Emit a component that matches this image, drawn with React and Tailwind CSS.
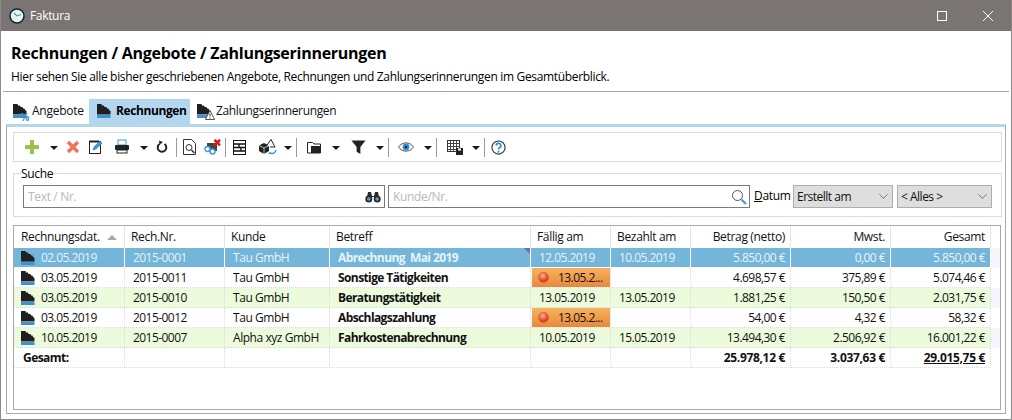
import { ChevronDown } from 'lucide-react';

const rows = [
    { date: '02.05.2019', nr: '2015-0001', kunde: 'Tau GmbH', betreff: 'Abrechnung  Mai 2019', faellig: '12.05.2019', bezahlt: '10.05.2019', betrag: '5.850,00 €', mwst: '0,00 €', gesamt: '5.850,00 €', selected: true },
    { date: '03.05.2019', nr: '2015-0011', kunde: 'Tau GmbH', betreff: 'Sonstige Tätigkeiten', faellig: '13.05.2...', bezahlt: '', betrag: '4.698,57 €', mwst: '375,89 €', gesamt: '5.074,46 €', overdue: true },
    { date: '03.05.2019', nr: '2015-0010', kunde: 'Tau GmbH', betreff: 'Beratungstätigkeit', faellig: '13.05.2019', bezahlt: '13.05.2019', betrag: '1.881,25 €', mwst: '150,50 €', gesamt: '2.031,75 €', paid: true },
    { date: '03.05.2019', nr: '2015-0012', kunde: 'Tau GmbH', betreff: 'Abschlagszahlung', faellig: '13.05.2...', bezahlt: '', betrag: '54,00 €', mwst: '4,32 €', gesamt: '58,32 €', overdue: true },
    { date: '10.05.2019', nr: '2015-0007', kunde: 'Alpha xyz GmbH', betreff: 'Fahrkostenabrechnung', faellig: '10.05.2019', bezahlt: '15.05.2019', betrag: '13.494,30 €', mwst: '2.506,92 €', gesamt: '16.001,22 €', paid: true },
];

const headers = [
    ['Rechnungsdat.', 'w-[111px]', 'pl-[7px]'],
    ['Rech.Nr.', 'w-[100px]', 'pl-1.5'],
    ['Kunde', 'w-[105px]', 'pl-1.5'],
    ['Betreff', 'w-[201px]', 'pl-1.5'],
    ['Fällig am', 'w-[80px]', 'pl-1.5'],
    ['Bezahlt am', 'w-[80px]', 'pl-1.5'],
    ['Betrag (netto)', 'w-[100px]', 'justify-end pr-[5px]'],
    ['Mwst.', 'w-[100px]', 'justify-end pr-[5px]'],
    ['Gesamt', 'w-[100px]', 'justify-end pr-[5px]'],
];

function DocIcon() {
    return (
        <svg viewBox="0 0 14 14" className="w-[14px] h-[14px] shrink-0">
            <path d="M0 0h4.500l.5 1.500h2L7.500 3h2l.5 1.500h1.500L12 6l1.500 1v3.500H0z" fill="#1f1f1f" />
            <rect x="0" y="11" width="13.500" height="3" fill="#3a93d3" />
        </svg>
    );
}

function Caret({ className = '' }) {
    return <span className={`w-0 h-0 shrink-0 border-x-[4px] border-x-transparent border-t-[4px] border-t-[#1a1a1a] mt-0.5 ${className}`} />;
}

function Sep({ className = '' }) {
    return <span className={`w-px h-[19px] shrink-0 bg-[#9a9a9a] ${className}`} />;
}

function Cell({ className = '', children }) {
    return <div className={`h-5 flex items-center shrink-0 whitespace-nowrap border-r border-b border-dotted border-[#dcdcdc] ${className}`}>{children}</div>;
}

function Tab({ label, active, badge, className }) {
    return (
        <div className={`h-[25px] flex items-center gap-[5px] pb-0.5 text-[12px] ${active ? 'bg-[#b3d7ef] font-bold' : 'text-[#111]'} ${className}`}>
            <span className="relative">
                <DocIcon />
                {badge === 'percent' && <span className="absolute -right-0.5 -bottom-1 text-[10px] leading-none font-bold text-[#2f8fd6]">%</span>}
                {badge === 'warn' && (
                    <svg viewBox="0 0 10 10" className="absolute -right-1 -bottom-0.5 w-2.5 h-2.5">
                        <path d="M5 .5 9.700 9.500H.3z" fill="#fff" stroke="#555" />
                        <path d="M5 3.500v3M5 7.500v1" stroke="#333" />
                    </svg>
                )}
            </span>
            {label}
        </div>
    );
}

function Toolbar() {
    return (
        <div className="h-[30px] border border-[#dcdcdc] flex items-center pl-[11px]">
            <svg viewBox="0 0 14 14" className="w-[14px] h-[14px] shrink-0"><path d="M5 0h4v5h5v4H9v5H5V9H0V5h5z" fill="#9bbf55" /></svg>
            <Caret className="ml-[11px]" />
            <svg viewBox="0 0 14 14" className="w-[14px] h-[14px] ml-[8px] shrink-0"><path d="M2 2l10 10M12 2 2 12" stroke="#f2705c" strokeWidth="3.400" /></svg>
            <svg viewBox="0 0 16 16" className="w-4 h-4 ml-[8px] shrink-0">
                <rect x="1.500" y="2.500" width="11" height="12" fill="#fff" stroke="#222" />
                <path d="M2 1v3M4 1v3M6 1v3M8 1v3M10 1v3" stroke="#222" />
                <path d="M5 11l1-3 6-6 2 2-6 6z" fill="#3d9ad9" stroke="#1f6fa8" strokeWidth=".6" />
            </svg>
            <svg viewBox="0 0 16 16" className="w-4 h-4 ml-[10px] shrink-0">
                <rect x="4" y="1" width="8" height="5" fill="#fff" stroke="#3d9ad9" />
                <rect x="1" y="6" width="14" height="5" rx="1" fill="#222" />
                <rect x="3" y="11" width="10" height="3" fill="#fff" stroke="#222" />
            </svg>
            <Caret className="ml-[10px]" />
            <svg viewBox="0 0 12 14" className="w-[12px] h-[14px] ml-[8px] shrink-0" fill="none">
                <path d="M3.500 4a4.300 4.300 0 1 0 5 0" stroke="#222" strokeWidth="2" />
                <path d="M3 .5l4 1.500-3.500 3z" fill="#222" />
            </svg>
            <Sep className="ml-[8px]" />
            <svg viewBox="0 0 13 16" className="w-[13px] h-4 ml-[6px] shrink-0" fill="none" stroke="#333">
                <path d="M.5.5h8l4 4v11H.5z" />
                <circle cx="6" cy="8.500" r="3" />
                <path d="M8.500 11l3 3" strokeWidth="1.500" />
            </svg>
            <svg viewBox="0 0 17 16" className="w-[17px] h-4 ml-[8px] shrink-0" fill="none">
                <path d="M3 4h10v8H3z" fill="#444" />
                <circle cx="3.500" cy="10" r="2.500" fill="#fff" stroke="#3d9ad9" strokeWidth="1.400" />
                <circle cx="8.500" cy="12.500" r="2.500" fill="#fff" stroke="#3d9ad9" strokeWidth="1.400" />
                <path d="M10.500 .8l5.500 5.500M16 .8l-5.500 5.500" stroke="#e8121a" strokeWidth="2.600" />
            </svg>
            <Sep className="ml-[4px]" />
            <svg viewBox="0 0 13 15" className="w-[13px] h-[15px] ml-[7px] shrink-0" fill="none" stroke="#111">
                <rect x=".5" y=".5" width="12" height="14" />
                <path d="M.5 4h12M.5 7.500h12M.5 11h12M6 4v3.500M8 7.500V11" strokeWidth="1.400" />
            </svg>
            <svg viewBox="0 0 20 16" className="w-5 h-4 ml-[12px] shrink-0">
                <path d="M1 6.500 6 4l5 2.500V12l-5 3-5-3z" fill="#222" />
                <path d="M6 9v6M1 6.500 6 9l5-2.500" stroke="#fff" strokeWidth=".7" fill="none" />
                <path d="M9 6l4-5.500L17 8h-5" fill="#fff" stroke="#222" />
                <path d="M18 11a4 4 0 0 1-6 3l-1.500.5" fill="none" stroke="#3d9ad9" strokeWidth="1.500" />
            </svg>
            <Caret className="ml-[6px]" />
            <Sep className="ml-[4px]" />
            <svg viewBox="0 0 14 14" className="w-[14px] h-[14px] ml-[10px] shrink-0">
                <path d="M.5 2.500h5L7 4h6.500v9H.5z" fill="#fff" stroke="#222" />
                <path d="M4 6h9.500v7H4z" fill="#222" />
            </svg>
            <Caret className="ml-[11px]" />
            <svg viewBox="0 0 16 16" className="w-[15px] h-4 ml-[11px] shrink-0"><path d="M.5 1h15L10 8v7.500L6 13V8z" fill="#222" /></svg>
            <Caret className="ml-[10px]" />
            <Sep className="ml-[4px]" />
            <svg viewBox="0 0 16 12" className="w-4 h-3 ml-[9px] shrink-0">
                <path d="M.5 6C4 .5 12 .5 15.500 6 12 11.500 4 11.500.5 6z" fill="#fff" stroke="#555" />
                <circle cx="8" cy="6" r="3.400" fill="#2f8fd6" />
                <circle cx="8" cy="6" r="1.300" fill="#123" />
            </svg>
            <Caret className="ml-[10px]" />
            <Sep className="ml-[4px]" />
            <svg viewBox="0 0 16 16" className="w-4 h-4 ml-[10px] shrink-0">
                <rect x=".5" y="1.500" width="12" height="11" fill="#fff" stroke="#333" />
                <path d="M.5 4.500h12M.5 7.500h12M.5 10.500h12M3.500 2v10M6.500 2v10M9.500 2v10" stroke="#444" />
                <rect x="9" y="9" width="7" height="7" fill="#222" />
                <rect x="11" y="9.500" width="3" height="2" fill="#fff" />
            </svg>
            <Caret className="ml-[9px]" />
            <Sep className="ml-[4px]" />
            <svg viewBox="0 0 16 16" className="w-[15px] h-[15px] ml-[6px] shrink-0" fill="none">
                <circle cx="8" cy="8" r="7" stroke="#333" strokeWidth="1.200" />
                <path d="M5.500 6a2.500 2.500 0 1 1 3.500 2.300c-.8.4-1 .9-1 1.700" stroke="#2f8fd6" strokeWidth="1.800" />
                <path d="M7 11.500h2v2H7z" fill="#2f8fd6" />
            </svg>
        </div>
    );
}

function Select({ label, className }) {
    return (
        <div className={`h-[23px] bg-[#dedede] border border-[#adadad] flex items-center justify-between pl-[3px] pr-[1px] text-[12px] tracking-[-0.5px] text-[#111] whitespace-pre ${className}`}>
            {label}
            <ChevronDown size={15} strokeWidth={1.100} className="text-[#444]" />
        </div>
    );
}

function SearchBox() {
    return (
        <fieldset className="relative h-[44px] border border-[#dcdcdc] mt-[11px]">
            <span className="absolute -top-[8px] left-[7px] text-[12px] leading-4 bg-white">Suche</span>
            <div className="flex items-center pt-[11px] pl-[9px]">
                <div className="w-[362px] h-[23px] border border-[#7a7a7a] flex items-center justify-between pl-1 pr-[3px] text-[12px] text-[#b8b8b8]">
                    Text / Nr.
                    <svg viewBox="0 0 16 12" className="w-4 h-3">
                        <circle cx="3.800" cy="8" r="3.500" fill="#2a2a2a" />
                        <circle cx="12.200" cy="8" r="3.500" fill="#2a2a2a" />
                        <path d="M3 1h3l1 4h2l1-4h3l1 5H2z" fill="#2a2a2a" />
                        <circle cx="3.800" cy="8" r="1.800" fill="#4aa0de" />
                        <circle cx="12.200" cy="8" r="1.800" fill="#4aa0de" />
                    </svg>
                </div>
                <div className="w-[362px] h-[23px] ml-[3px] border border-[#7a7a7a] flex items-center justify-between pl-1 pr-0.5 text-[12px] text-[#b8b8b8]">
                    Kunde/Nr.
                    <svg viewBox="0 0 16 16" className="w-4 h-4" fill="none">
                        <circle cx="6.500" cy="6.500" r="5" stroke="#555" />
                        <path d="M10.500 10.500l4.500 4.500" stroke="#3d9ad9" strokeWidth="2.200" />
                    </svg>
                </div>
                <span className="w-[36px] ml-1 mb-0.5 text-[12px]"><span className="underline">D</span>atum</span>
                <Select label="Erstellt am" className="w-[100px] ml-[3px]" />
                <Select label="< Alles >" className="w-[95px] ml-[4px]" />
            </div>
        </fieldset>
    );
}

function Row({ row }) {
    const bg = row.selected ? 'bg-[#74b6d9] text-[#e8f3f9]' : row.paid ? 'bg-[#ebfbdc]' : 'bg-white';
    const filler = row.selected || row.paid ? 'bg-[#f6f6ff]' : 'bg-white';
    const line = row.selected ? 'border-solid border-r-white border-b-white' : '';
    const num = `tracking-[-0.55px] ${line}`;
    return (
        <div className="flex text-[12px] leading-none text-[#111]">
            <div className={`flex ${bg}`}>
                <Cell className={`w-[111px] pl-[7px] gap-[6px] ${num}`}><DocIcon />{row.date}</Cell>
                <Cell className={`w-[100px] pl-2 ${num}`}>{row.nr}</Cell>
                <Cell className={`w-[105px] pl-2 tracking-[-0.45px] ${line}`}>{row.kunde}</Cell>
                <Cell className={`w-[201px] pl-2 font-bold whitespace-pre relative tracking-[-0.6px] ${line}`}>
                    {row.betreff}
                    {row.selected && <span className="absolute top-0 right-0 w-0 h-0 border-l-[6px] border-l-transparent border-t-[6px] border-t-[#6a6fb5]" />}
                </Cell>
                {row.overdue ? (
                    <Cell className={`w-[80px] pl-px ${num}`}>
                        <div className="w-full h-[19px] bg-gradient-to-b from-[#f7b25e] to-[#e8883a] flex items-center gap-[9px] pl-[6px]">
                            <span className="w-[11px] h-[11px] rounded-full bg-[radial-gradient(circle_at_40%_30%,#ffb199,#e8381a_65%)] border border-[#c96a30]" />
                            13.05.2...
                        </div>
                    </Cell>
                ) : (
                    <Cell className={`w-[80px] pl-2 ${num}`}>{row.faellig}</Cell>
                )}
                <Cell className={`w-[80px] pl-2 ${num}`}>{row.bezahlt}</Cell>
                <Cell className={`w-[100px] justify-end pr-[5px] ${num}`}>{row.betrag}</Cell>
                <Cell className={`w-[100px] justify-end pr-[5px] ${num}`}>{row.mwst}</Cell>
                <Cell className={`w-[100px] justify-end pr-[5px] ${num}`}>{row.gesamt}</Cell>
            </div>
            <div className={`flex-1 h-5 ${filler}`} />
        </div>
    );
}

function InvoiceTable() {
    return (
        <div className="h-[185px] mt-[8px] mr-px border border-[#a9a9a9] overflow-hidden">
            <div className="flex h-[22px] text-[12px] text-[#111]">
                {headers.map(([label, width, align], i) => (
                    <div key={label} className={`${width} ${align} shrink-0 flex items-center gap-[7px] border-r border-[#e5e5e5]`}>
                        {label}
                        {i === 0 && <span className="w-0 h-0 border-x-[5px] border-x-transparent border-b-[5px] border-b-[#a8a8a8]" />}
                    </div>
                ))}
            </div>
            {rows.map((row) => <Row key={row.nr} row={row} />)}
            <div className="flex text-[12px] leading-none font-bold text-[#111]">
                <Cell className="w-[111px] pl-[9px] tracking-[-0.55px]">Gesamt:</Cell>
                <Cell className="w-[100px]" />
                <Cell className="w-[105px]" />
                <Cell className="w-[201px]" />
                <Cell className="w-[80px]" />
                <Cell className="w-[80px]" />
                <Cell className="w-[100px] justify-end pr-[5px]">25.978,12 €</Cell>
                <Cell className="w-[100px] justify-end pr-[5px]">3.037,63 €</Cell>
                <Cell className="w-[100px] justify-end pr-[5px]"><span className="underline">29.015,75 €</span></Cell>
            </div>
        </div>
    );
}

export default function App() {
    return (
        <div className="w-[1012px] h-[420px] overflow-hidden bg-white text-black tracking-[-0.33px] border-x border-b border-[#8a8a8a] font-['Open_Sans','Noto_Sans',sans-serif] flex flex-col">
            <div className="h-[31px] -mx-px bg-[#7a7472] flex items-center pl-[9px] text-white shrink-0">
                <svg viewBox="0 0 16 16" className="w-4 h-4">
                    <circle cx="8" cy="8" r="7" fill="#e9f3f3" stroke="#12262b" strokeWidth="1.500" />
                    <path d="M8 8 5 5M8 8l4-1.500" stroke="#2aa7a7" strokeWidth="1.200" />
                </svg>
                <span className="ml-[5px] text-[12px]">Faktura</span>
                <div className="ml-auto flex items-center">
                    <span className="w-[10px] h-[10px] border border-white" />
                    <svg viewBox="0 0 10 10" className="w-[10px] h-[10px] ml-9 mr-[19px]">
                        <path d="M0 0l10 10M10 0 0 10" stroke="#fff" strokeWidth="1" />
                    </svg>
                </div>
            </div>

            <div className="px-[10px] pt-[13px] shrink-0">
                <h1 className="text-[16px] leading-[18px] font-bold tracking-[-0.27px]">Rechnungen / Angebote / Zahlungserinnerungen</h1>
                <p className="mt-[7px] text-[12px] leading-4">Hier sehen Sie alle bisher geschriebenen Angebote, Rechnungen und Zahlungserinnerungen im Gesamtüberblick.</p>
            </div>
            <div className="h-px bg-[#a5a5a5] mx-[2px] mt-[6px] shrink-0" />

            <div className="flex items-center pl-[8px] mt-[7px] shrink-0">
                <Tab label="Angebote" badge="percent" className="w-[80px] pl-1 tracking-[-0.25px]" />
                <Tab label="Rechnungen" active className="w-[101px] pl-2 tracking-[-0.4px]" />
                <Tab label="Zahlungserinnerungen" badge="warn" className="pl-[7px] tracking-[-0.35px]" />
            </div>

            <div className="mx-[5px] h-[290px] border-t-[3px] border-t-[#b3d7ef] border-x border-b border-x-[#a9a9a9] border-b-[#a9a9a9] pl-[6px] pr-[3px] pt-[5px] shrink-0">
                <Toolbar />
                <SearchBox />
                <InvoiceTable />
            </div>
        </div>
    );
}
